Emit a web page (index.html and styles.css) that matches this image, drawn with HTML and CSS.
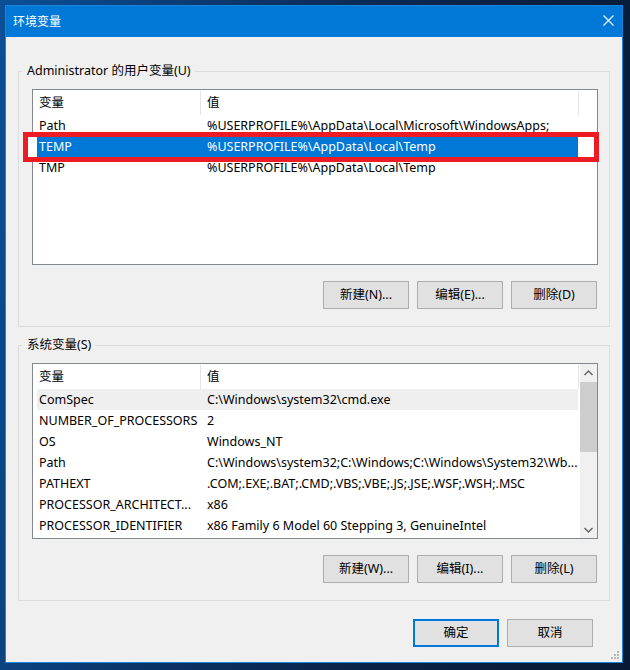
FILE: index.html
```html
<!DOCTYPE html>
<html lang="zh-CN">
<head>
<meta charset="utf-8">
<title>环境变量</title>
<link rel="stylesheet" href="styles.css">
</head>
<body>
<div class="window">
  <div class="titlebar">
    <span class="title">环境变量</span>
    <svg class="close" width="11" height="11" viewBox="0 0 11 11"><path d="M0.5 0.5 L10.5 10.5 M10.5 0.5 L0.5 10.5" stroke="#fff" stroke-width="1.1" fill="none"/></svg>
  </div>
  <div class="content">
    <fieldset class="group">
      <legend>Administrator 的用户变量(U)</legend>
      <div class="list">
        <div class="list-main">
          <div class="list-head">
            <div class="h1">变量</div>
            <div class="h2">值</div>
            <div class="h3"></div>
          </div>
          <div class="row"><div class="c1">Path</div><div class="c2">%USERPROFILE%\AppData\Local\Microsoft\WindowsApps;</div></div>
          <div class="row selected"><div class="c1">TEMP</div><div class="c2">%USERPROFILE%\AppData\Local\Temp</div></div>
          <div class="row"><div class="c1">TMP</div><div class="c2">%USERPROFILE%\AppData\Local\Temp</div></div>
        </div>
        <div class="mark"></div>
      </div>
      <div class="btns">
        <button class="btn">新建(N)...</button>
        <button class="btn">编辑(E)...</button>
        <button class="btn">删除(D)</button>
      </div>
    </fieldset>

    <fieldset class="group group-sys">
      <legend>系统变量(S)</legend>
      <div class="list">
        <div class="list-main">
          <div class="list-head">
            <div class="h1">变量</div>
            <div class="h2">值</div>
            <div class="h3"></div>
          </div>
          <div class="row hover"><div class="c1">ComSpec</div><div class="c2">C:\Windows\system32\cmd.exe</div></div>
          <div class="row"><div class="c1">NUMBER_OF_PROCESSORS</div><div class="c2">2</div></div>
          <div class="row"><div class="c1">OS</div><div class="c2">Windows_NT</div></div>
          <div class="row"><div class="c1">Path</div><div class="c2">C:\Windows\system32;C:\Windows;C:\Windows\System32\Wb...</div></div>
          <div class="row"><div class="c1">PATHEXT</div><div class="c2">.COM;.EXE;.BAT;.CMD;.VBS;.VBE;.JS;.JSE;.WSF;.WSH;.MSC</div></div>
          <div class="row"><div class="c1">PROCESSOR_ARCHITECT...</div><div class="c2">x86</div></div>
          <div class="row"><div class="c1">PROCESSOR_IDENTIFIER</div><div class="c2">x86 Family 6 Model 60 Stepping 3, GenuineIntel</div></div>
        </div>
        <div class="scrollbar">
          <div class="sb-btn"><svg width="9" height="6" viewBox="0 0 9 6"><path d="M0.5 5 L4.5 1 L8.5 5" stroke="#606060" stroke-width="1.4" fill="none"/></svg></div>
          <div class="sb-track"><div class="sb-thumb"></div></div>
          <div class="sb-btn"><svg width="9" height="6" viewBox="0 0 9 6"><path d="M0.5 1 L4.5 5 L8.5 1" stroke="#606060" stroke-width="1.4" fill="none"/></svg></div>
        </div>
      </div>
      <div class="btns">
        <button class="btn">新建(W)...</button>
        <button class="btn">编辑(I)...</button>
        <button class="btn">删除(L)</button>
      </div>
    </fieldset>

    <div class="footer">
      <button class="btn btn-default">确定</button>
      <button class="btn">取消</button>
    </div>
  </div>
  <svg class="grip" width="9" height="9" viewBox="0 0 9 9">
    <rect x="6" y="0" width="2" height="2" fill="#b8b8b8"/>
    <rect x="3" y="3" width="2" height="2" fill="#b8b8b8"/>
    <rect x="6" y="3" width="2" height="2" fill="#b8b8b8"/>
    <rect x="0" y="6" width="2" height="2" fill="#b8b8b8"/>
    <rect x="3" y="6" width="2" height="2" fill="#b8b8b8"/>
    <rect x="6" y="6" width="2" height="2" fill="#b8b8b8"/>
  </svg>
</div>
</body>
</html>
```

FILE: styles.css
```css
* { box-sizing: border-box; }

html, body {
  margin: 0;
  width: 630px;
  height: 670px;
  overflow: hidden;
}

body {
  padding: 5px 0 0 5px;
  background: linear-gradient(100deg, #0b4f96 0%, #0a3366 35%, #0a2246 65%, #081a33 100%);
  font-family: "Noto Sans", "Noto Sans CJK SC", sans-serif;
  font-size: 12.5px;
  color: #000;
}

.window {
  position: relative;
  width: 618px;
  height: 658px;
  border: 1px solid #1a85d9;
  background: #f0f0f0;
  display: flex;
  flex-direction: column;
}

.titlebar {
  height: 31px;
  background: #0078d7;
  color: #fff;
  display: flex;
  align-items: center;
  justify-content: space-between;
  padding: 0 8px 0 7px;
  flex: none;
}

.title {
  font-family: "Noto Sans CJK SC", sans-serif;
  font-size: 12px;
  line-height: 16px;
  margin-top: -2px;
}

.close { display: block; margin-top: -2px; }

.content {
  flex: 1;
  padding: 26px 12px 0 12px;
  display: flex;
  flex-direction: column;
}

.group {
  margin: 0;
  border: 1px solid #dcdcdc;
  padding: 0 11px 17px 13px;
  min-width: 0;
}

.group-sys { margin-top: 10px; }

.group legend {
  margin-left: -10px;
  padding: 0 4px 0 5px;
  line-height: 16px;
  height: 16px;
  color: #000;
}

.list {
  position: relative;
  margin-top: 10px;
  height: 176px;
  border: 1px solid #828790;
  background: #fff;
  display: flex;
}

.list-main {
  flex: 1;
  min-width: 0;
}

.list-head {
  display: flex;
  height: 25px;
  line-height: 24px;
  padding-top: 1px;
}

.h1 {
  width: 167px;
  padding-left: 6px;
  flex: none;
}

.h2 {
  width: 378px;
  padding-left: 6px;
  border-left: 1px solid #e5e5e5;
  flex: none;
}

.h3 {
  flex: 1;
  border-left: 1px solid #e5e5e5;
}

.row {
  display: flex;
  height: 21px;
  line-height: 20px;
  padding-top: 1px;
  margin-left: 4px;
  width: 541px;
  white-space: nowrap;
}

.row.selected {
  background: #0078d7;
  color: #fff;
}

.row.hover {
  background: #efefef;
}

.c1 {
  width: 163px;
  padding-left: 2px;
  flex: none;
  overflow: hidden;
}

.c2 {
  flex: 1;
  padding-left: 7px;
  overflow: hidden;
}

.mark {
  position: absolute;
  left: -10px;
  top: 42px;
  width: 576px;
  height: 30px;
  border: 5px solid #ed1c24;
  box-shadow: inset 9px 0 0 #fff, inset -15px 0 0 #fff;
}

.scrollbar {
  width: 17px;
  flex: none;
  background: #f0f0f0;
  display: flex;
  flex-direction: column;
}

.sb-btn {
  height: 17px;
  display: flex;
  align-items: center;
  justify-content: center;
  flex: none;
}

.sb-track {
  flex: 1;
  padding-top: 1px;
}

.sb-thumb {
  height: 70px;
  background: #cdcdcd;
}

.btns {
  display: flex;
  justify-content: flex-end;
  gap: 8px;
  margin-top: 16px;
  padding-right: 1px;
}

.btn {
  width: 86px;
  height: 28px;
  margin: 0;
  padding: 0;
  border: 1px solid #adadad;
  background: #e1e1e1;
  font-family: "Noto Sans", "Noto Sans CJK SC", sans-serif;
  font-size: 12.5px;
  color: #000;
  line-height: 16px;
}

.btn-default {
  border: 2px solid #0078d7;
}

.footer {
  display: flex;
  justify-content: flex-end;
  gap: 8px;
  margin-top: 18px;
  padding-right: 17px;
}

.grip {
  position: absolute;
  right: 2px;
  bottom: 2px;
}
```
